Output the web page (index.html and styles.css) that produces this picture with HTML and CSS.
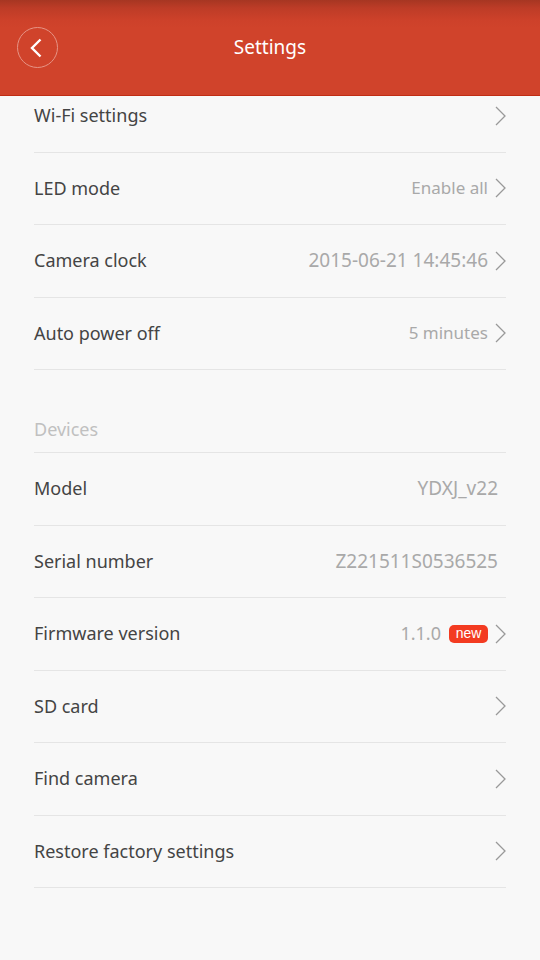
FILE: index.html
```html
<!DOCTYPE html>
<html lang="en">
<head>
<meta charset="utf-8">
<meta name="viewport" content="width=device-width, initial-scale=1">
<title>Settings</title>
<link rel="stylesheet" href="styles.css">
</head>
<body>
<svg class="sprite" aria-hidden="true">
  <symbol id="chevron" viewBox="0 0 11 20"><path d="M1 1 10 10 1 19" fill="none" stroke="currentColor" stroke-width="1.3"/></symbol>
</svg>
<header class="bar">
  <button class="back" type="button" aria-label="Back">
    <svg viewBox="0 0 12 20" width="12" height="20" aria-hidden="true"><path d="M10.500 1.500 2 10l8.500 8.500" fill="none" stroke="currentColor" stroke-width="2.400"/></svg>
  </button>
  <h1 class="title">Settings</h1>
</header>
<main class="content">
  <ul class="list">
    <li><button class="row" type="button"><span class="label">Wi-Fi settings</span><svg class="chevron"><use href="#chevron"/></svg></button></li>
    <li><button class="row" type="button"><span class="label">LED mode</span><span class="value words">Enable all</span><svg class="chevron"><use href="#chevron"/></svg></button></li>
    <li><button class="row" type="button"><span class="label">Camera clock</span><span class="value code">2015-06-21 14:45:46</span><svg class="chevron"><use href="#chevron"/></svg></button></li>
    <li><button class="row" type="button"><span class="label">Auto power off</span><span class="value words">5 minutes</span><svg class="chevron"><use href="#chevron"/></svg></button></li>
  </ul>
  <h2 class="section">Devices</h2>
  <ul class="list">
    <li><div class="row plain"><span class="label">Model</span><span class="value code">YDXJ_v22</span></div></li>
    <li><div class="row plain"><span class="label">Serial number</span><span class="value code">Z221511S0536525</span></div></li>
    <li><button class="row" type="button"><span class="label">Firmware version</span><span class="value">1.1.0</span><span class="badge">new</span><svg class="chevron"><use href="#chevron"/></svg></button></li>
    <li><button class="row" type="button"><span class="label">SD card</span><svg class="chevron"><use href="#chevron"/></svg></button></li>
    <li><button class="row" type="button"><span class="label">Find camera</span><svg class="chevron"><use href="#chevron"/></svg></button></li>
    <li><button class="row" type="button"><span class="label">Restore factory settings</span><svg class="chevron"><use href="#chevron"/></svg></button></li>
  </ul>
</main>
</body>
</html>
```
FILE: styles.css
```css
* { box-sizing: border-box; }

body {
  margin: 0;
  background: #f8f8f8;
  color: #444;
  font-family: "Noto Sans", sans-serif;
  font-size: 18px;
  line-height: 24px;
}

button {
  font: inherit;
  color: inherit;
  background: none;
  border: 0;
  padding: 0;
  cursor: pointer;
}

.sprite { display: none; }

.bar {
  position: sticky;
  top: 0;
  z-index: 1;
  display: grid;
  grid-template-columns: 41px 1fr 41px;
  align-items: center;
  height: 96px;
  padding: 0 17px;
  color: #fff;
  background: linear-gradient(#a63622, #bd3c27 8px, #cd412a 20px, #d0432b 28px);
  border-bottom: 1px solid #c02d14;
}

.back {
  display: flex;
  align-items: center;
  justify-content: center;
  height: 41px;
  padding-right: 4px;
  border: 1px solid #e69486;
  border-radius: 50%;
}

.title {
  margin: 0;
  padding-bottom: 2px;
  font-size: 19px;
  font-weight: 400;
  text-align: center;
}

/* The list is scrolled slightly under the bar. */
.content {
  margin-top: -16px;
  padding: 0 34px 32px;
}

.list {
  list-style: none;
  margin: 0;
  padding: 0;
}

.list li {
  height: 72px;
  border-bottom: 1px solid #e5e5e5;
}

.list li:nth-child(odd) { height: 73px; }

.row {
  display: flex;
  align-items: center;
  width: 100%;
  height: 100%;
  padding-bottom: 1px;
  text-align: left;
}

.plain { padding-right: 8px; }

.label { flex: 1; }

.label,
.value { padding-bottom: 1px; }

.value { color: #a9a9a9; }

.words { font-size: 17px; }

.code { font-size: 19px; }

.badge {
  margin-left: 8px;
  width: 39px;
  height: 18px;
  border-radius: 5px;
  background: #f33b21;
  color: #fff;
  font-family: "Liberation Sans", sans-serif;
  font-size: 14px;
  line-height: 16px;
  text-align: center;
}

.chevron {
  width: 11px;
  height: 20px;
  margin-left: 7px;
  color: #999;
}

.section {
  margin: 0;
  padding: 47px 0 11px;
  border-bottom: 1px solid #e5e5e5;
  color: #c0c0c0;
  font-size: 18px;
  font-weight: 400;
}
```
